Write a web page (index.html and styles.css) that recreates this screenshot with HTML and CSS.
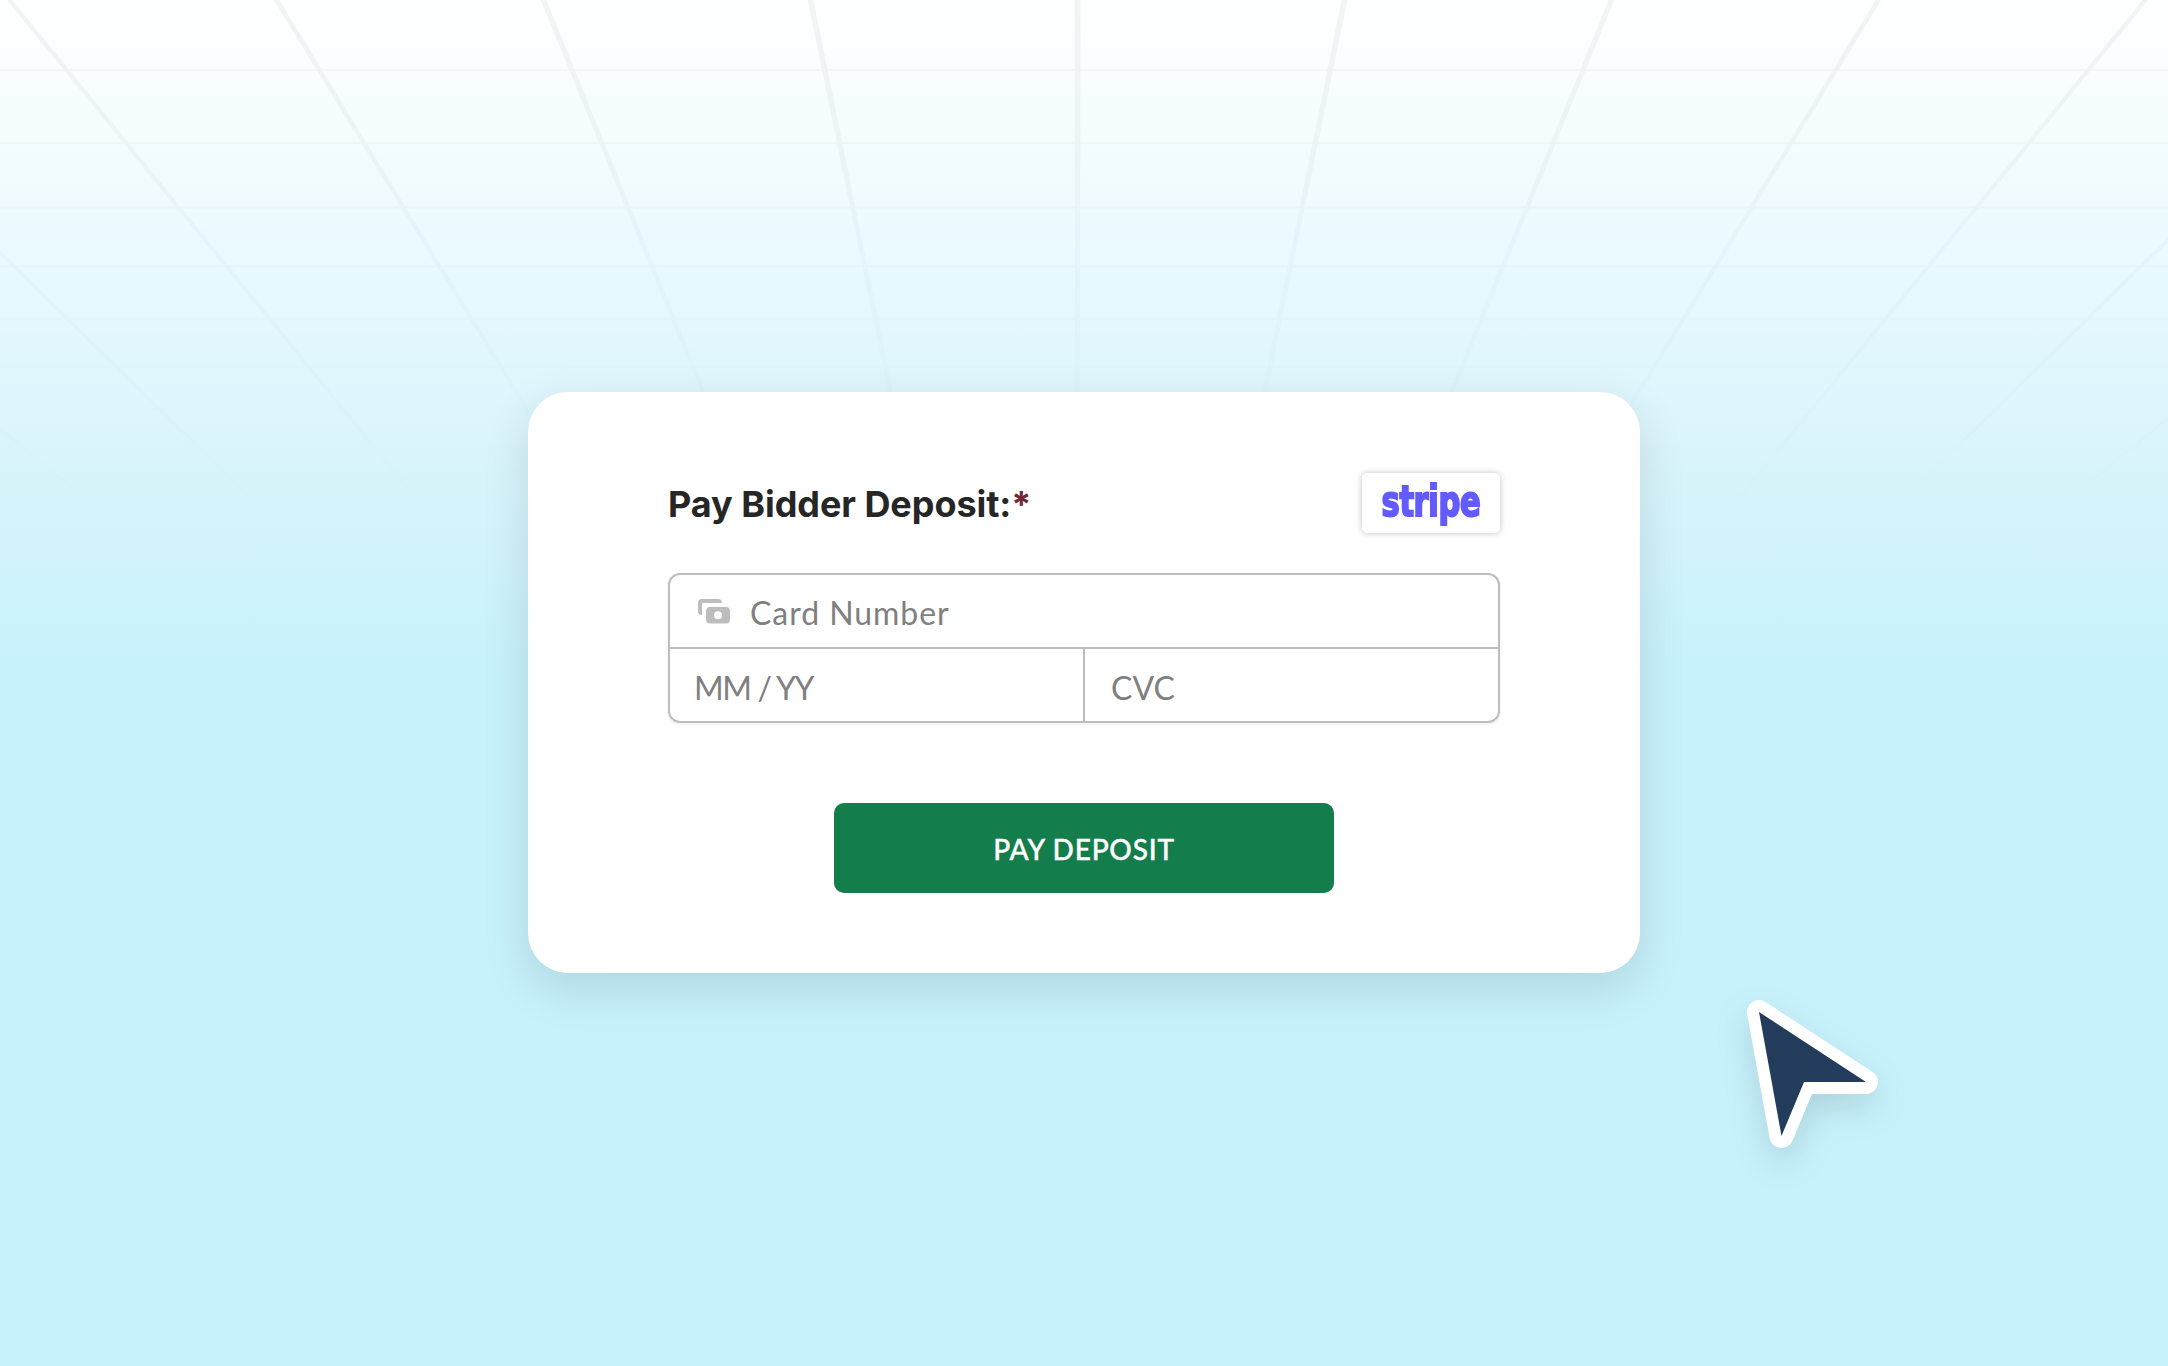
FILE: index.html
```html
<!DOCTYPE html>
<html lang="en">

<head>
    <meta charset="UTF-8">
    <meta name="viewport" content="width=device-width, initial-scale=1.0">
    <title>Pay Bidder Deposit</title>
    <link rel="stylesheet" href="styles.css">
</head>

<body>
    <!-- perspective grid, fades out towards the card -->
    <svg class="grid" width="2168" height="620" viewBox="0 0 2168 620" aria-hidden="true">
        <g id="grid-rays"></g>
        <g class="grid-rows">
            <path d="M0 70H2168" stroke-width="2.6" />
            <path d="M0 143H2168" stroke-width="2.6" />
            <path d="M0 207.5H2168" stroke-width="2.6" />
            <path d="M0 266.3H2168" stroke-width="2.6" />
            <path d="M0 318.7H2168" stroke-width="2.4" />
            <path d="M0 366.3H2168" stroke-width="2.2" />
            <path d="M0 409H2168" stroke-width="2" />
            <path d="M0 448H2168" stroke-width="2" />
            <path d="M0 484H2168" stroke-width="2" />
            <path d="M0 517H2168" stroke-width="2" />
        </g>
    </svg>

    <main class="card">
        <div class="card-header">
            <h1>Pay Bidder Deposit:<span class="required">*</span></h1>
            <div class="stripe"><span>stripe</span></div>
        </div>

        <form class="payment">
            <div class="fields">
                <div class="field field-number">
                    <svg class="cash" width="32" height="25" viewBox="0 0 32 25">
                        <path d="M4 0H20Q24 0 24 4H4V16Q0 16 0 12V4Q0 0 4 0Z" />
                        <path fill-rule="evenodd" d="M12 8H28Q32 8 32 12V20.500Q32 24.500 28 24.500H12Q8 24.500 8 20.500V12Q8 8 12 8ZM20 12.200A4 4 0 1 0 20 20.200A4 4 0 1 0 20 12.200Z" />
                    </svg>
                    <span class="number-text">Card Number</span>
                </div>
                <div class="field field-date"><span>MM / YY</span></div>
                <div class="field field-cvc"><span>CVC</span></div>
            </div>
            <button type="button" class="pay-button">PAY DEPOSIT</button>
        </form>
    </main>

    <svg class="cursor" width="240" height="240" viewBox="0 0 240 240" aria-hidden="true">
        <path class="cursor-edge" d="M59 52L166 122H104L81.500 176Z" />
        <path class="cursor-fill" d="M59 52L166 122H104L81.500 176Z" />
    </svg>

    <script>
        // every ray runs to the same vanishing point and gets thinner on the way
        const rays = document.getElementById('grid-rays');
        for (let i = -10; i <= 10; i++) {
            const x = 1077.5 + i * 267;
            const ray = document.createElementNS('http://www.w3.org/2000/svg', 'path');
            ray.setAttribute('d', `M${x - 2.9} 0H${x + 2.9}L1079 1310H1076Z`);
            rays.appendChild(ray);
        }
    </script>
</body>

</html>
```
FILE: styles.css
```css
body {
    margin: 0;
    height: 100vh;
    display: flex;
    align-items: center;
    justify-content: center;
    position: relative;
    overflow: hidden;
    background: linear-gradient(#ffffff 0px, #effbfe 200px, #e1f7fd 350px, #d8f4fb 480px, #c7f1fb 670px);
    font-family: Lato, "Open Sans", sans-serif;
}

.grid {
    position: absolute;
    top: 0;
    left: 0;
    fill: #0f1010;
    opacity: 0.045;
    -webkit-mask-image: linear-gradient(#000 0, rgba(0, 0, 0, 0.45) 270px, rgba(0, 0, 0, 0.2) 420px, transparent 560px);
    mask-image: linear-gradient(#000 0, rgba(0, 0, 0, 0.45) 270px, rgba(0, 0, 0, 0.2) 420px, transparent 560px);
}

.grid-rows {
    stroke: #0f1010;
    stroke-opacity: 0.75;
}

.card {
    position: relative;
    box-sizing: border-box;
    width: 1112px;
    height: 581px;
    margin-bottom: 1px;
    padding: 80px 140px;
    background-color: white;
    border-radius: 40px;
    box-shadow: 0 16px 48px rgba(0, 20, 30, 0.12);
}

.card-header {
    display: flex;
    justify-content: space-between;
    align-items: center;
    height: 61px;
    margin-bottom: 40px;
}

h1 {
    margin: 2px 0 0;
    font-family: Inter, sans-serif;
    font-size: 36px;
    font-weight: 700;
    line-height: 44px;
    letter-spacing: -0.05px;
    color: #262626;
}

.required {
    color: #722737;
}

.stripe {
    display: flex;
    align-items: center;
    justify-content: center;
    width: 138px;
    height: 60px;
    margin-top: 1px;
    border-radius: 5px;
    background-color: white;
    box-shadow: 0 0 6px rgba(0, 0, 0, 0.25);
}

.stripe span {
    margin-bottom: 3px;
    font-family: "DejaVu Sans Condensed", "DejaVu Sans", sans-serif;
    font-stretch: condensed;
    font-size: 42px;
    font-weight: 700;
    line-height: 56px;
    letter-spacing: -0.5px;
    color: #635bff;
    -webkit-text-stroke: 2px #635bff;
    transform: scaleX(0.81);
}

.fields {
    display: grid;
    grid-template-columns: 415px 1fr;
    grid-template-rows: 74px 1fr;
    box-sizing: border-box;
    height: 150px;
    border: 2px solid #bdbdbd;
    border-radius: 12px;
    box-shadow: 0 2px 4px rgba(0, 0, 0, 0.06);
}

.field {
    display: flex;
    align-items: center;
    box-sizing: border-box;
    padding: 6px 0 0 26px;
    font-size: 32px;
    line-height: 40px;
    color: #808080;
}

.field-number {
    grid-column: 1 / 3;
    padding-top: 4px;
    padding-left: 28px;
    border-bottom: 2px solid #bdbdbd;
}

.field-date {
    padding-left: 24px;
    border-right: 2px solid #bdbdbd;
    letter-spacing: -1.4px;
}

.cash {
    margin: 0 20px 3px 0;
    fill: #bdbdbd;
}

.number-text {
    letter-spacing: 0.95px;
}

.pay-button {
    display: block;
    width: 500px;
    height: 90px;
    margin: 80px auto 0;
    padding: 2px 0 0;
    border: none;
    border-radius: 10px;
    background-color: #147d4c;
    color: white;
    font-family: Lato, sans-serif;
    font-size: 28px;
    font-weight: 500;
    letter-spacing: 0.8px;
    -webkit-text-stroke: 0.4px white;
}

.cursor {
    position: absolute;
    top: 960px;
    left: 1700px;
    overflow: visible;
    filter: drop-shadow(0 14px 16px rgba(0, 20, 30, 0.13));
}

.cursor-edge {
    fill: white;
    stroke: white;
    stroke-width: 24;
    stroke-linejoin: round;
}

.cursor-fill {
    fill: #243c5c;
}
```
